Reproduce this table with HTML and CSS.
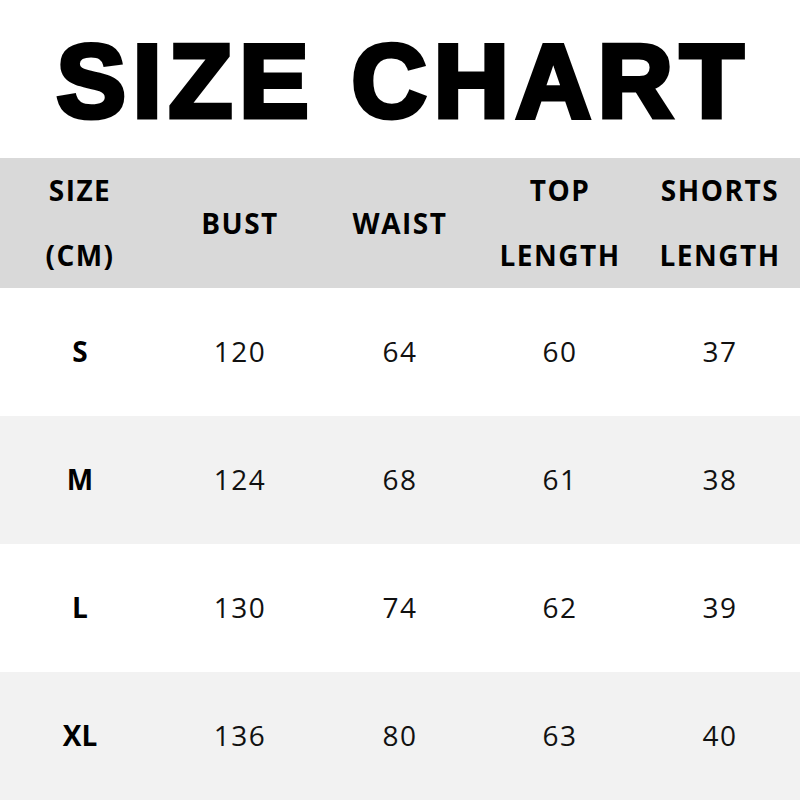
FILE: index.html
```html
<!DOCTYPE html>
<html>
<head>
<meta charset="utf-8">
<link rel="stylesheet" href="styles.css">
</head>
<body>
<div class="page">
  <div class="title">SIZE CHART</div>
  <div class="table">
    <div class="row head">
      <div class="cell two"><span>SIZE</span><span>(CM)</span></div>
      <div class="cell">BUST</div>
      <div class="cell">WAIST</div>
      <div class="cell two"><span>TOP</span><span>LENGTH</span></div>
      <div class="cell two"><span>SHORTS</span><span>LENGTH</span></div>
    </div>
    <div class="row">
      <div class="cell label">S</div><div class="cell">120</div><div class="cell">64</div><div class="cell">60</div><div class="cell">37</div>
    </div>
    <div class="row alt">
      <div class="cell label">M</div><div class="cell">124</div><div class="cell">68</div><div class="cell">61</div><div class="cell">38</div>
    </div>
    <div class="row">
      <div class="cell label">L</div><div class="cell">130</div><div class="cell">74</div><div class="cell">62</div><div class="cell">39</div>
    </div>
    <div class="row alt">
      <div class="cell label">XL</div><div class="cell">136</div><div class="cell">80</div><div class="cell">63</div><div class="cell">40</div>
    </div>
  </div>
</div>
</body>
</html>
```
FILE: styles.css
```css
html, body {
  margin: 0;
  padding: 0;
  background: #ffffff;
}
.page {
  width: 800px;
  height: 800px;
  overflow: hidden;
  font-family: "Open Sans", "Noto Sans", sans-serif;
  color: #000;
}
.title {
  height: 158px;
  display: flex;
  align-items: center;
  justify-content: center;
  font-family: "Liberation Sans", Arial, sans-serif;
  font-weight: 700;
  font-size: 104px;
  letter-spacing: 7px;
  text-indent: 7px;
  -webkit-text-stroke: 5px #000;
  line-height: 1;
  padding-top: 4px;
  box-sizing: border-box;
}
.table {
  display: flex;
  flex-direction: column;
}
.row {
  display: grid;
  grid-template-columns: repeat(5, 160px);
  height: 128px;
  font-size: 28px;
  letter-spacing: 1.5px;
  color: #111;
  padding-bottom: 3px;
  box-sizing: border-box;
}
.row.alt {
  background: #f2f2f2;
}
.row.head {
  height: 130px;
  background: #d9d9d9;
  font-weight: 700;
  font-size: 28px;
  letter-spacing: 1.5px;
  color: #000;
  padding-bottom: 8px;
}
.cell {
  display: flex;
  align-items: center;
  justify-content: center;
  text-align: center;
}
.cell.two {
  flex-direction: column;
  line-height: 65px;
}
.cell.label {
  font-weight: 700;
  color: #000;
  letter-spacing: 0;
}
```
